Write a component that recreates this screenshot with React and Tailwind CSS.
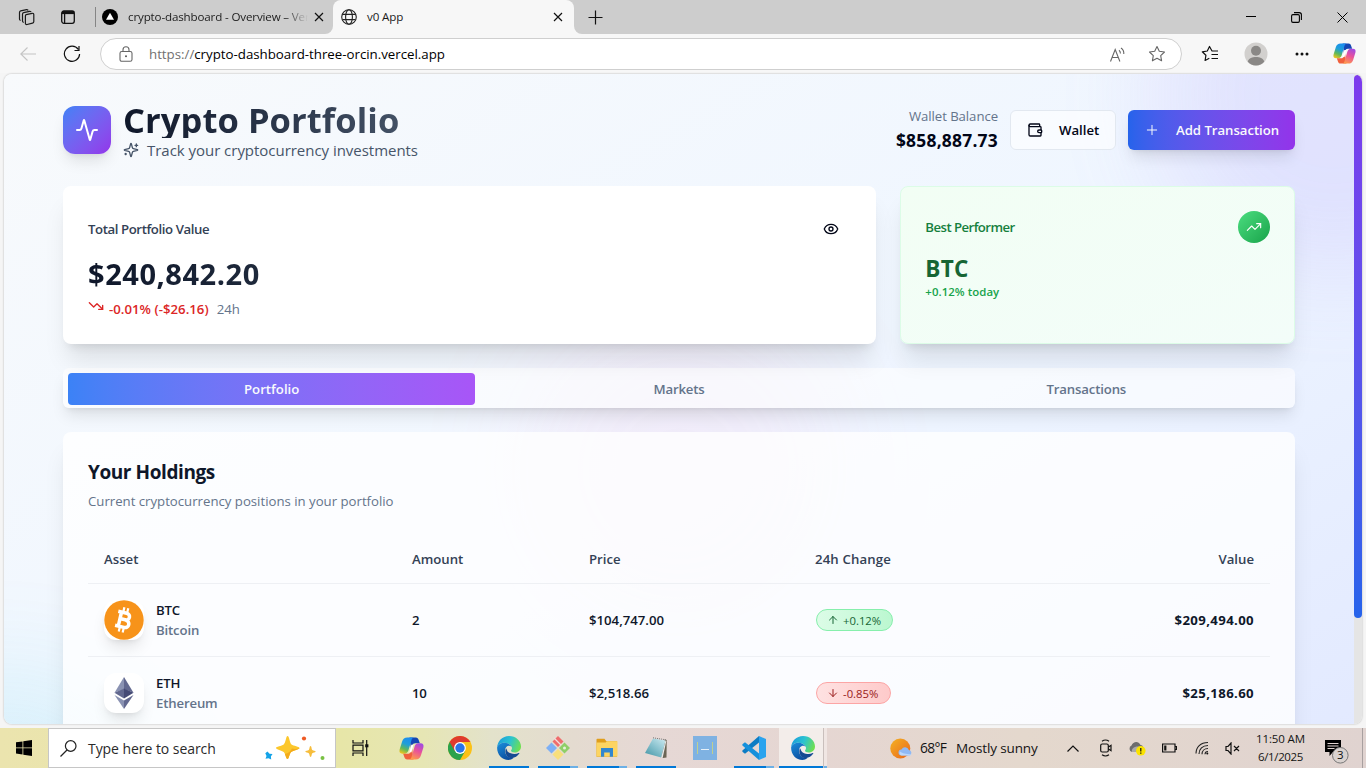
import React from "react";
import {
  Activity, Wallet, Plus, Eye, TrendingDown, TrendingUp, ArrowUp, ArrowDown,
} from "lucide-react";

/* ---------- shared marks ---------- */

function CopilotMark({ id, className }) {
  return (
    <svg viewBox="0 0 24 24" className={className}>
      <defs>
        <linearGradient id={id + "a"} x1="0.6" y1="0" x2="0.2" y2="1">
          <stop offset="0" stopColor="#1b8df0" />
          <stop offset="0.4" stopColor="#1f9fd8" />
          <stop offset="0.7" stopColor="#5fb85a" />
          <stop offset="1" stopColor="#f3c51c" />
        </linearGradient>
        <linearGradient id={id + "b"} x1="0.7" y1="0" x2="0.3" y2="1">
          <stop offset="0" stopColor="#a24be0" />
          <stop offset="0.45" stopColor="#e8519c" />
          <stop offset="1" stopColor="#ff9a4a" />
        </linearGradient>
      </defs>
      <path d="M10 1.500h6.200c1.500 0 2.200.9 2.700 2.400L20 7h-4.400c-1.600 0-2.400.7-2.900 2.200l-1.200 3z" fill="#1446b4" />
      <path d="M8 1.500h6.200c-1.300.4-1.900 1.300-2.300 2.700L9.300 13c-.7 2.600-1.700 4-4.300 4H3.300C.8 17 0 15.300.6 13L3 5.300C3.800 2.800 5.300 1.500 8 1.500z" fill={`url(#${id}a)`} />
      <path d="M14 22.500H7.800c-1.500 0-2.200-.9-2.700-2.400L4 17h4.400c1.600 0 2.400-.7 2.900-2.200l1.200-3z" fill="#f0603c" />
      <path d="M16 22.500H9.800c1.300-.4 1.900-1.300 2.300-2.700L14.700 11c.7-2.600 1.700-4 4.300-4h1.700c2.500 0 3.300 1.700 2.700 4L21 18.700c-.8 2.500-2.300 3.800-5 3.800z" fill={`url(#${id}b)`} />
      <path d="M13.800 8.300l-1.800 7.400h-2L11.800 8.300z" fill="#fff" />
    </svg>
  );
}

function EdgeMark({ id }) {
  return (
    <svg viewBox="0 0 24 24" className="h-6 w-6">
      <defs>
        <linearGradient id={id + "t"} x1="0" y1="0.3" x2="1" y2="0.6">
          <stop offset="0" stopColor="#1c9ddb" />
          <stop offset="0.5" stopColor="#2bc3d0" />
          <stop offset="1" stopColor="#6fe04d" />
        </linearGradient>
        <linearGradient id={id + "l"} x1="0" y1="0" x2="0.5" y2="1">
          <stop offset="0" stopColor="#1b8fdc" />
          <stop offset="1" stopColor="#0d4fa0" />
        </linearGradient>
      </defs>
      <path d="M.1 11.500C.5 5 5.500 0 12 0c7 0 12 5 12 10.500 0 3.500-2.700 6-6.200 6-2.500 0-3.800-.9-3.800-1.700 0-.7 1-1.100 1-2.800C15 9.500 11.500 6.700 7.500 6.700 4 6.700.8 8.700.1 11.500z" fill={`url(#${id}t)`} />
      <path d="M.1 11.500C.8 8.700 4 6.700 7.500 6.700c3.300 0 6.100 1.900 7.100 4-1-.8-2.100-1.100-3.100-.9-2.200.5-3.700 2.700-3.500 5.200.2 4.500 4 7.600 8.500 7-1.500 1.200-3.200 2-5 2C5 24 0 18.500.1 11.500z" fill={`url(#${id}l)`} />
      <path d="M9 12.200C7.200 15.800 9 22 15 22.300c2.900-.5 5.500-2.100 7.300-4.700.3-.5-.1-.9-.6-.6-4 2-10.700.6-11.700-2.800-.2-.8-.4-1.500-1-2z" fill="#154a93" />
    </svg>
  );
}

/* ---------- browser chrome ---------- */

function TabBar() {
  return (
    <div className="flex h-[34px] items-stretch bg-[#f7f7f7] text-[#1b1b1b]">
      <div className="flex w-[333px] items-center rounded-br-lg bg-[#cdcdcd]">
        <svg viewBox="0 0 17 17" className="ml-[18px] h-[17px] w-[17px]" fill="none" stroke="#1b1b1b" strokeWidth="1.200" strokeLinejoin="round" strokeLinecap="round">
          <path d="M8.200 5.600l5.900-1.300c1-.2 1.700.3 1.700 1.300v6.900c0 .9-.5 1.500-1.300 1.700l-5.400 1.300c-1 .2-1.700-.3-1.700-1.300V7.100c0-.8.300-1.300.8-1.500z" />
          <path d="M5.300 13.200c-.5-.2-.8-.7-.8-1.400V5.200c0-.8.400-1.300 1.200-1.500l5.800-1.300c.6-.1 1 0 1.300.3M2.200 11.200c-.4-.2-.7-.7-.7-1.300V3.400c0-.8.4-1.300 1.200-1.500L8.500.7c.6-.1 1 0 1.300.3" />
        </svg>
        <svg viewBox="0 0 16 16" className="ml-[25px] h-4 w-4" fill="none" stroke="#111" strokeWidth="1.300">
          <rect x="1.700" y="2" width="12.600" height="12.300" rx="2.200" />
          <path d="M2 3.600h12" strokeWidth="3" /><path d="M4.600 5v9" />
        </svg>
        <div className="ml-[19px] h-5 w-px bg-[#858585]" />
        <svg viewBox="0 0 16 16" className="ml-[6px] h-4 w-4">
          <circle cx="8" cy="8" r="8" fill="#000" />
          <path d="M8 3.800l4 7H4z" fill="#fff" />
        </svg>
        <div className="ml-[10px] w-[180px] overflow-hidden whitespace-nowrap bg-[linear-gradient(90deg,#1b1b1b_87%,transparent_100%)] bg-clip-text text-[11.600px] leading-[18px] tracking-[-0.013em] text-transparent">
          crypto-dashboard - Overview – Vercel
        </div>
        <svg viewBox="0 0 10 10" className="ml-[6px] h-[10px] w-[10px]" stroke="#111" strokeWidth="1.200"><path d="M1 1l8 8M9 1l-8 8" /></svg>
      </div>
      <div className="w-[241px] bg-[#cdcdcd]">
        <div className="flex h-full items-center rounded-t-lg bg-[#f7f7f7]">
          <svg viewBox="0 0 16 16" className="ml-2 h-4 w-4" fill="none" stroke="#222" strokeWidth="1.100"><circle cx="8" cy="8" r="7.300" /><ellipse cx="8" cy="8" rx="3.400" ry="7.300" /><path d="M1.500 5.400h13M1.500 10.600h13" /></svg>
          <div className="ml-[10px] flex-1 text-[11.600px] leading-[18px] tracking-[-0.010em]">v0 App</div>
          <svg viewBox="0 0 10 10" className="mr-[11px] h-[10px] w-[10px]" stroke="#111" strokeWidth="1.200"><path d="M1 1l8 8M9 1l-8 8" /></svg>
        </div>
      </div>
      <div className="flex flex-1 items-center rounded-bl-lg bg-[#cdcdcd]">
        <svg viewBox="0 0 15 15" className="ml-[14px] h-[15px] w-[15px]" stroke="#111" strokeWidth="1.200"><path d="M7.500 .5v14M.5 7.500h14" /></svg>
        <div className="flex-1" />
        <svg viewBox="0 0 10 10" className="h-[10px] w-[10px]" stroke="#000" strokeWidth="1"><path d="M0 4.500h10" /></svg>
        <svg viewBox="0 0 11 11" className="ml-[35px] h-[11px] w-[11px]" fill="none" stroke="#000" strokeWidth="1.100"><rect x=".6" y="2.600" width="7.800" height="7.800" rx="1.300" /><path d="M3 .6h5.200c1.400 0 2.200.8 2.200 2.200V8" /></svg>
        <svg viewBox="0 0 11 11" className="ml-[35px] mr-[18px] h-[11px] w-[11px]" stroke="#000" strokeWidth="1"><path d="M.5 .5l10 10M10.500 .5l-10 10" /></svg>
      </div>
    </div>
  );
}

function AddressBar() {
  return (
    <div className="flex h-[39px] items-center bg-[#f7f7f7]">
      <svg viewBox="0 0 16 14" className="ml-5 h-[14px] w-4" fill="none" stroke="#c4c4c4" strokeWidth="1.100"><path d="M16 7H.8M7.500 .5L.8 7l6.700 6.500" /></svg>
      <svg viewBox="0 0 18 18" className="ml-[27px] h-[18px] w-[18px]" fill="none" stroke="#111" strokeWidth="1.200"><path d="M15.300 4.500A7.600 7.600 0 1 0 16.600 9M16 1v4.500h-4.500" /></svg>
      <div className="ml-[19px] mt-px flex h-8 w-[1082px] items-center rounded-full border border-[#cfcfcf] bg-white">
        <svg viewBox="0 0 14 16" className="ml-[18px] h-4 w-[14px]" fill="none" stroke="#666" strokeWidth="1.100">
          <rect x="1" y="5.500" width="12" height="9.800" rx="1.800" />
          <path d="M4 5.500V3.800a3 3 0 0 1 6 0v1.700" />
          <circle cx="7" cy="10.300" r="1" fill="#555" stroke="none" />
        </svg>
        <div className="ml-4 flex-1 text-[13.300px] leading-5 tracking-[-0.001em] text-black"><span className="text-[#717171]">https://</span>crypto-dashboard-three-orcin.vercel.app</div>
        <svg viewBox="0 0 17 15" className="mr-[-2px] h-[15px] w-[17px]" fill="none" stroke="#666" strokeWidth="1.100">
          <path d="M1.500 14.500L6.200 2.500l4.700 12M3.100 10.500h6.200M10 3.300c1 .8 1.500 1.900 1.400 3.200M12 1c2 1.400 3 3.400 2.800 6" />
        </svg>
        <svg viewBox="0 0 18 18" className="ml-6 mr-[15px] h-[18px] w-[18px]" fill="none" stroke="#666" strokeWidth="1.100" strokeLinejoin="round">
          <path d="M9 1.500l2.300 4.800 5.200.7-3.800 3.600.9 5.200L9 13.300l-4.600 2.500.9-5.200L1.500 7l5.200-.7z" />
        </svg>
      </div>
      <svg viewBox="0 0 18 18" className="ml-[19px] h-[18px] w-[18px]" fill="none" stroke="#111" strokeWidth="1.200" strokeLinejoin="round">
        <path d="M11 6L8.500 1.500 6.300 6l-5 .8 3.600 3.500-.8 5.200 4.200-2.200M10.700 6h6.300M10.500 9.500h6.500M10.500 13.500h6.500" />
      </svg>
      <svg viewBox="0 0 24 24" className="ml-[25px] h-6 w-6">
        <circle cx="12" cy="12" r="11.500" fill="#d2d0ce" />
        <circle cx="12" cy="8.800" r="5" fill="#8a8886" />
        <path d="M3.700 19.500c1.500-3.500 4.500-4.500 8.300-4.500s6.800 1 8.300 4.500c-2 2.500-5 4-8.300 4s-6.300-1.500-8.300-4z" fill="#8a8886" />
      </svg>
      <svg viewBox="0 0 14 4" className="ml-[27px] h-1 w-[14px]" fill="#111"><circle cx="2" cy="2" r="1.500" /><circle cx="7" cy="2" r="1.500" /><circle cx="12" cy="2" r="1.500" /></svg>
      <CopilotMark id="cpA" className="ml-6 h-[23px] w-[23px]" />
    </div>
  );
}

/* ---------- dashboard ---------- */

function Sparkle() {
  return (
    <svg viewBox="0 0 24 24" className="h-4 w-4" fill="none" stroke="currentColor" strokeWidth="2" strokeLinecap="round" strokeLinejoin="round">
      <path d="M9.937 15.500A2 2 0 0 0 8.500 14.063l-6.135-1.582a.5.5 0 0 1 0-.962L8.500 9.936A2 2 0 0 0 9.937 8.500l1.582-6.135a.5.5 0 0 1 .963 0L14.063 8.500A2 2 0 0 0 15.500 9.937l6.135 1.581a.5.5 0 0 1 0 .964L15.500 14.063a2 2 0 0 0-1.437 1.437l-1.582 6.135a.5.5 0 0 1-.963 0z" />
      <path d="M20 3v4M22 5h-4M4 17v2M5 18H3" />
    </svg>
  );
}

function Header() {
  return (
    <div className="flex h-16 items-center justify-between">
      <div className="flex items-center gap-3">
        <div className="flex h-12 w-12 items-center justify-center rounded-xl bg-gradient-to-br from-[#3b82f6] to-[#9333ea] shadow-lg">
          <Activity className="h-6 w-6 text-white" />
        </div>
        <div>
          <h1 className="h-10 whitespace-nowrap bg-gradient-to-r from-[#0f172a] to-[#475569] bg-clip-text pt-px text-[34.500px] font-bold leading-[41px] tracking-[0.002em] text-transparent">Crypto Portfolio</h1>
          <p className="flex h-6 items-center gap-2 whitespace-nowrap text-[15px] leading-6 tracking-[-0.002em] text-[#475569]"><Sparkle /><span>Track your cryptocurrency investments</span></p>
        </div>
      </div>
      <div className="flex items-center gap-3">
        <div className="text-right">
          <p className="text-[13.200px] leading-5 tracking-[-0.005em] text-[#64748b]">Wallet Balance</p>
          <p className="pt-px text-[17.400px] font-bold leading-[27px] tracking-[0.014em] text-[#020617]">$858,887.73</p>
        </div>
        <div className="flex h-10 w-[106px] items-center rounded-md border border-[#e2e8f0] bg-white/60 pl-4 text-[13.200px] font-semibold text-[#020617]">
          <Wallet className="h-4 w-4" /><span className="ml-4 pt-0.5">Wallet</span>
        </div>
        <div className="flex h-10 w-[167px] items-center rounded-md bg-gradient-to-r from-[#2563eb] to-[#9333ea] pl-4 text-[13.200px] font-semibold text-[#f8fafc] shadow-lg">
          <Plus className="h-4 w-4" strokeWidth={1.500} /><span className="ml-4 whitespace-nowrap pt-0.5 tracking-[-0.003em]">Add Transaction</span>
        </div>
      </div>
    </div>
  );
}

function SummaryCards() {
  return (
    <div className="mt-6 grid h-[158px] grid-cols-3 gap-6">
      <div className="col-span-2 rounded-lg bg-white p-[25px] shadow-xl">
        <div className="flex h-9 items-center justify-between text-[13.200px] font-semibold text-[#334155]">
          <span className="pt-0.5 tracking-[-0.031em]">Total Portfolio Value</span>
          <Eye className="mr-3 h-4 w-4 text-[#020617]" />
        </div>
        <div className="mt-[9px] text-[29px] font-bold leading-9 tracking-[0.019em] text-[#0f172a]"><span className="bg-gradient-to-r from-[#0f172a] to-[#1e293b] bg-clip-text text-transparent">$240,842.20</span></div>
        <div className="mt-[7px] flex h-5 items-center text-[13.200px]">
          <TrendingDown className="mb-[6px] h-4 w-4 text-[#dc2626]" />
          <span className="ml-[5px] pt-0.5 font-semibold tracking-[0.002em] text-[#dc2626]">-0.01% (-$26.16)</span>
          <span className="ml-2 pt-0.5 text-[#64748b]">24h</span>
        </div>
      </div>
      <div className="rounded-lg border border-[#dcfce7] bg-gradient-to-br from-[#f2fef4] to-[#f3fdf9] p-6 shadow-xl">
        <div className="flex h-8 items-center justify-between text-[13.200px] font-semibold text-[#15803d]">
          <span className="pt-0.5 tracking-[-0.042em]">Best Performer</span>
          <div className="flex h-8 w-8 items-center justify-center rounded-full bg-gradient-to-br from-[#4ade80] to-[#16a34a] text-white"><TrendingUp className="h-4 w-4" strokeWidth={1.700} /></div>
        </div>
        <div className="mt-[10px] text-[22.500px] font-bold leading-8 tracking-[0.010em] text-[#166534]">BTC</div>
        <div className="mt-[-1px] text-[11.400px] font-semibold leading-4 tracking-[0.005em] text-[#16a34a]">+0.12% today</div>
      </div>
    </div>
  );
}

function Tabs() {
  return (
    <div className="mt-6 grid h-10 grid-cols-3 rounded-md bg-white/60 p-[5px] text-center text-[13.200px] font-semibold leading-8 tracking-[-0.012em] text-[#64748b] shadow-lg">
      <div className="rounded bg-gradient-to-r from-[#3b82f6] to-[#a855f7] tracking-normal text-[#f8fafc]">Portfolio</div>
      <div>Markets</div>
      <div>Transactions</div>
    </div>
  );
}

function BtcCoin() {
  return (
    <svg viewBox="0 0 40 40" className="h-10 w-10">
      <circle cx="20" cy="20" r="19.700" fill="#f7931a" />
      <g transform="rotate(13 20 20)" fill="none" stroke="#fff">
        <path d="M15.800 12v16M12.500 12.800h8.600c4.800 0 4.800 6.700 0 6.700h-5.500M21.500 19.700c5.600 0 5.600 7.500 0 7.500h-9" strokeWidth="3.500" />
        <path d="M17.500 7.500v4.500M21.500 7.500v4.500M17.500 28v4.500M21.500 28v4.500" strokeWidth="2.200" />
      </g>
    </svg>
  );
}

function EthCoin() {
  return (
    <svg viewBox="0 0 40 40" className="h-10 w-10">
      <path d="M20 4l-9.500 15.700L20 16z" fill="#8a92b2" />
      <path d="M20 4l9.500 15.700L20 16z" fill="#62688f" />
      <path d="M10.500 19.700L20 15.400v10z" fill="#62688f" />
      <path d="M29.500 19.700L20 15.400v10z" fill="#454a75" />
      <path d="M10.500 22L20 27.500V36z" fill="#8a92b2" />
      <path d="M29.500 22L20 27.500V36z" fill="#62688f" />
    </svg>
  );
}

const cols = "grid grid-cols-[308px_177px_226px_170px_269px] items-center px-4";

function Row({ coin, sym, name, amount, price, change, value }) {
  return (
    <div className={cols + " h-[73px] border-b border-[#eef0f4] text-[13.200px] font-semibold text-[#0f172a]"}>
      <div className="flex items-center gap-3">
        <div className="h-10 w-10 rounded-xl bg-white shadow-lg">{coin}</div>
        <div className="leading-5 tracking-[-0.012em]"><div>{sym}</div><div className="text-[#64748b]">{name}</div></div>
      </div>
      <div className="pt-0.5 tracking-[-0.020em]">{amount}</div>
      <div className="pt-0.5">{price}</div>
      <div className="flex">{change}</div>
      <div className="pt-0.5 text-right font-bold tracking-[0.028em]">{value}</div>
    </div>
  );
}

function Holdings() {
  return (
    <div className="mt-6 h-[400px] rounded-lg bg-white/80 px-[25px] pt-[25px] shadow-xl">
      <h2 className="h-[30px] text-[19px] font-bold leading-[30px] tracking-[-0.022em] text-[#0f172a]">Your Holdings</h2>
      <p className="mt-1 text-[13.200px] leading-5 text-[#64748b]">Current cryptocurrency positions in your portfolio</p>
      <div className="mt-6">
        <div className={cols + " h-[49px] border-b border-[#eef0f4] pt-0.5 text-[13.200px] font-semibold text-[#334155]"}>
          <div>Asset</div><div>Amount</div><div>Price</div><div className="tracking-[0.010em]">24h Change</div><div className="text-right">Value</div>
        </div>
        <Row coin={<BtcCoin />} sym="BTC" name="Bitcoin" amount="2" price="$104,747.00" value="$209,494.00"
          change={<div className="ml-px flex h-[22px] w-[77px] items-center rounded-full border border-[#86efac] bg-gradient-to-r from-[#dcfce7] to-[#bbf7d0] pl-[10px] text-[11.300px] font-medium text-[#166534]"><ArrowUp className="mr-1 h-3 w-3" /><span className="pt-0.5">+0.12%</span></div>} />
        <Row coin={<EthCoin />} sym="ETH" name="Ethereum" amount="10" price="$2,518.66" value="$25,186.60"
          change={<div className="ml-px flex h-[22px] w-[75px] items-center rounded-full border border-[#fca5a5] bg-gradient-to-r from-[#fee2e2] to-[#fecaca] pl-[10px] text-[11.300px] font-medium text-[#991b1b]"><ArrowDown className="mr-1 h-3 w-3" /><span className="pt-0.5">-0.85%</span></div>} />
      </div>
    </div>
  );
}

function Page() {
  return (
    <div className="flex h-[655px] bg-[#f5f5f5] px-1 pb-[4px] pt-px">
      <div className="flex h-[650px] w-[1358px] overflow-hidden rounded-lg bg-white shadow-[0_0_2px_#aaa]">
        <div className="relative w-[1350px] overflow-hidden">
          <div className="absolute inset-x-0 top-0 h-[790px] bg-gradient-to-br from-[#f8fafc] via-[#eff6ff] to-[#e0e7ff]">
            <div className="absolute -right-40 -top-40 h-[360px] w-[360px] rounded-full bg-[#a08bfa] opacity-[0.17] blur-[50px]" />
            <div className="absolute -bottom-36 -left-40 h-80 w-80 rounded-full bg-gradient-to-tr from-[#22d3ee] to-[#22c3dd] opacity-[0.15] blur-3xl" />
            <div className="absolute left-1/2 top-1/2 h-80 w-80 -translate-x-1/2 -translate-y-1/2 rounded-full bg-[#f472b6] opacity-[0.08] blur-3xl" />
          </div>
          <div className="relative ml-[59px] w-[1232px] pt-6">
            <Header />
            <SummaryCards />
            <Tabs />
            <Holdings />
          </div>
        </div>
        <div className="w-2 bg-[#e5e5e5] pt-px">
          <div className="h-[543px] rounded-full bg-gradient-to-b from-[#7c3aed] to-[#2563eb]" />
        </div>
      </div>
    </div>
  );
}

/* ---------- taskbar ---------- */

function Slot({ children, line }) {
  return (
    <div className="flex h-10 w-[49px] flex-col items-center pr-px">
      <div className="flex h-[38px] items-center pt-[2px]">{children}</div>
      {line === 1 && <div className="h-0.5 w-10 bg-[#0078d7]" />}
      {line === 2 && <div className="flex h-0.5 w-10"><div className="w-8 bg-[#0078d7]" /><div className="w-2 bg-[#6cb0e6]" /></div>}
    </div>
  );
}

function Taskbar() {
  return (
    <div className="flex h-10 items-center bg-[linear-gradient(90deg,#ebe4ae_0%,#e7e6a8_25%,#e6e6b4_31%,#e3e2cb_36%,#e4dbd0_42%,#e6d8d5_48%,#e5d6d2_60%,#e4d8cd_75%,#e0d3d0_100%)] text-[#141414]">
      <div className="flex h-10 w-12 items-center justify-center">
        <svg viewBox="0 0 16 16" className="h-4 w-4"><path d="M0 2.300L6.500 1.400v6.100H0zM7.300 1.300L16 0v7.500H7.300zM0 8.300h6.500v6.200L0 13.600zM7.300 8.300H16V16l-8.700-1.300z" fill="#000" /></svg>
      </div>
      <div className="flex h-10 w-72 items-center border border-[#c6c6c6] bg-white">
        <svg viewBox="0 0 17 17" className="ml-[11px] h-[17px] w-[17px]" fill="none" stroke="#222" strokeWidth="1.200"><circle cx="10.700" cy="6" r="5.300" /><path d="M7 10L.5 16.500" /></svg>
        <span className="ml-[11px] w-[160px] whitespace-nowrap pt-px text-[14px] tracking-[-0.004em] text-[#2a2a2a]">Type here to search</span>
        <svg viewBox="0 0 62 26" className="ml-[16px] h-[26px] w-[62px]">
          <path d="M23.500 1c1.800 0 2.200 7 4 8.400s8 2.100 8 3.600-6.500 2.400-8.300 4-2.200 7-3.700 7-2-5.400-3.800-7-7.700-2.500-7.700-4 5.700-2.100 7.700-3.600S22 1 23.500 1z" fill="#fcc72c" />
          <path d="M35.500 13c0 1.500-6.500 2.400-8.300 4s-2.200 7-3.700 7c-1.200 0-1.700-2.800-2.600-5 3.500-.5 6-3 7-5.500 2.500.8 5 .5 7.600-.5z" fill="#f3ab1c" />
          <path d="M46.500 11c1.200 0 .9 3 1.800 3.900s3.500.7 3.500 1.700-2.700.8-3.500 1.700-.6 3.700-1.700 3.700-.9-2.800-1.800-3.700-3.500-.7-3.500-1.700 2.600-.9 3.500-1.700.6-3.900 1.700-3.900z" fill="#f6bd3c" />
          <path d="M3.500 16.500l2 2.300 3 .2-1.600 2.500.3 3-2.700-1.300-3 .5 1-2.800-1.200-2.600z" fill="#14a3e8" />
          <circle cx="40" cy="3.500" r="2.100" fill="#ee5a24" /><circle cx="58.500" cy="23" r="2" fill="#79c143" />
        </svg>
      </div>
      <div className="flex w-[51px] justify-center pr-[3px]">
        <svg viewBox="0 0 17 16" className="h-4 w-[17px]" fill="none" stroke="#111" strokeWidth="1.200"><path d="M1 0v3h10V0M1 16v-3h10v3M1 5.200h10v5.600H1zM14.700 0v16" /><path d="M13.200 5.800h3.200" strokeWidth="3" /></svg>
      </div>
      <Slot><CopilotMark id="cpB" className="h-[25px] w-[25px]" /></Slot>
      <Slot>
        <svg viewBox="0 0 24 24" className="h-6 w-6">
          <circle cx="12" cy="12" r="12" fill="#fbc116" />
          <path d="M1.600 6A12 12 0 0 0 12 24l5.200-9L12 12z" fill="#2ba24c" />
          <path d="M1.600 6A12 12 0 0 1 22.400 6H12l-5.200 9z" fill="#df3b2e" />
          <circle cx="12" cy="12" r="5.900" fill="#fff" /><circle cx="12" cy="12" r="4.700" fill="#2b74e8" />
        </svg>
      </Slot>
      <Slot line={1}><EdgeMark id="e1" /></Slot>
      <Slot line={2}>
        <svg viewBox="0 0 24 24" className="h-6 w-6">
          <path d="M12 0l5.500 5.500L12 11 6.500 5.500z" fill="#ef6d6d" /><path d="M18.500 6.500L24 12l-5.500 5.500L13 12z" fill="#8fcf68" />
          <path d="M5.500 6.500L11 12l-5.500 5.500L0 12z" fill="#7db0f5" /><path d="M12 13l5.500 5.500L12 24l-5.500-5.500z" fill="#f8df7c" />
          <path d="M8 2l7 7" stroke="#f3dede" strokeWidth="1.200" /><circle cx="18.500" cy="12" r="1.500" fill="#e8f2d8" />
        </svg>
      </Slot>
      <Slot line={2}>
        <svg viewBox="0 0 22 20" className="h-5 w-[22px]">
          <path d="M.5 1.500C.5 1 1 .7 1.500.7h7l1.800 2.600H21v15.500H.5z" fill="#e09e1c" /><path d="M.5 4.500h9L11 3.300h10.500V18.500H.5z" fill="#fcd462" />
          <path d="M5 10h12v8.700h-3.200v-4.200H8.200v4.200H5z" fill="#3287cf" />
        </svg>
      </Slot>
      <Slot line={1}>
        <svg viewBox="0 0 24 24" className="h-6 w-6">
          <defs><linearGradient id="note" x1="1" y1="0" x2="0.2" y2="1"><stop offset="0" stopColor="#cdeaf0" /><stop offset="0.5" stopColor="#8cc4d0" /><stop offset="1" stopColor="#4c9bab" /></linearGradient></defs>
          <path d="M20.500 3.500l2.200.5-.2 17.500-3.500.5-2-1.500z" fill="#6b6555" />
          <path d="M9 2.500L21.500 4.500l-4.300 17L1 17z" fill="url(#note)" />
          <path d="M21.500 4.500l-4.300 17 1.500.2L22.300 5z" fill="#e9ecec" /><path d="M9 1.800l13 2" stroke="#777" strokeDasharray="1 1" />
        </svg>
      </Slot>
      <Slot>
        <svg viewBox="0 0 24 24" className="h-6 w-6"><path d="M0 0h24v24H0z" fill="#7fb2e2" /><path d="M4.500 6v12M19.500 6v12" stroke="#c0cf8e" /><path d="M8 13.500h8" stroke="#e5f0f8" /></svg>
      </Slot>
      <Slot line={2}>
        <svg viewBox="0 0 24 24" className="h-6 w-6">
          <path d="M17 0l7 3v18l-7 3z" fill="#2aa3ee" />
          <path d="M17 6.500L3 17.800.4 15.800v-1.400L17 0z" fill="#0d7cc4" /><path d="M17 17.500L3 6.200.4 8.200v1.400L17 24z" fill="#1590dc" />
        </svg>
      </Slot>
      <div className="flex h-10 w-[45px] flex-col border-r border-[#c9bfbc] bg-[#f3edea]">
        <div className="flex h-[38px] items-center justify-center pl-[3px] pt-[2px]"><EdgeMark id="e2" /></div>
        <div className="h-0.5 w-full bg-[#0078d7]" />
      </div>
      <div className="flex h-10 w-[3px] flex-col justify-end bg-[#f0e6e3]"><div className="h-0.5 bg-[#6cb0e6]" /></div>
      <svg viewBox="0 0 23 21" className="ml-[63px] h-[21px] w-[23px]">
        <defs><linearGradient id="sun" x1="0" y1="0" x2="1" y2="1"><stop offset="0" stopColor="#f4b223" /><stop offset="1" stopColor="#e9661c" /></linearGradient></defs>
        <circle cx="10.300" cy="10.500" r="10" fill="url(#sun)" />
        <path d="M11.500 17.500a3 3 0 0 1 0-6 4 4 0 0 1 7.300.5 2.800 2.800 0 0 1 .5 5.500z" fill="#8fb9f5" /><path d="M11.500 17.500a2.500 2.500 0 0 1-1.500-4c3 2 5 2.500 11.500 3-.6.700-1.200 1-2.200 1z" fill="#bcd8fb" />
      </svg>
      <span className="ml-[7px] w-[36px] whitespace-nowrap pt-px text-[13.800px] tracking-[-0.045em]">68°F</span>
      <span className="w-[83px] whitespace-nowrap pt-px text-[13.500px] tracking-[-0.010em]">Mostly sunny</span>
      <svg viewBox="0 0 12 7" className="ml-[28px] h-[7px] w-3" fill="none" stroke="#111" strokeWidth="1.200"><path d="M.5 6.500L6 1l5.500 5.500" /></svg>
      <svg viewBox="0 0 12 18" className="ml-[21px] h-[18px] w-3" fill="none" stroke="#111" strokeWidth="1.200"><rect x=".7" y="5" width="7.600" height="8" rx="1.500" /><path d="M8.500 8l2.500-1.700v5.400L8.500 10M2 2.200Q5.500-.2 9 2.200M2 15.800q3.500 2.400 7 0" /></svg>
      <svg viewBox="0 0 18 16" className="ml-4 h-4 w-[18px]"><path d="M4 12a3.500 3.500 0 0 1-.5-6.500C5 1.500 10.500.5 12.500 5c1.500 0 2.500 1 3 3L7 12z" fill="#6d6d6d" /><path d="M4 12c-1-3 2-6 7-5.500L8 12z" fill="#aaa" /><circle cx="12.800" cy="10.800" r="4.800" fill="#fbe300" /><path d="M12.800 8v3.500M12.800 12.500v1.200" stroke="#111" strokeWidth="1.200" /></svg>
      <svg viewBox="0 0 15 10" className="ml-[16px] h-[10px] w-[15px]" fill="none" stroke="#111" strokeWidth="1.200"><path d="M.6 1h12.400v8H.6zM13.500 3.500h1v3h-1" /><path d="M3.300 2.500v5" strokeWidth="2.200" /></svg>
      <svg viewBox="0 0 14 14" className="ml-[18px] h-[14px] w-[14px]" fill="none" stroke="#222" strokeWidth="1.100"><path d="M1 12.500C1 6 5.500 1.500 13 1.500M4 13C4 8 7.500 4.500 13 4.500M7 13.200c0-3.400 2.500-5.700 6-5.700M10 13.300c0-1.800 1.200-2.800 3-2.800" /><circle cx="12.300" cy="12.500" r="1" fill="#111" stroke="none" /></svg>
      <svg viewBox="0 0 15 13" className="ml-4 h-[13px] w-[15px]" fill="none" stroke="#111" strokeWidth="1.200"><path d="M1 4.500h2L6 1v11L3 8.500H1zM9 4l5 5M14 4L9 9" /></svg>
      <div className="ml-[12px] w-[57px] whitespace-nowrap text-center text-[11.500px] leading-[18px]"><div className="tracking-[-0.012em]">11:50 AM</div><div className="tracking-[-0.030em]">6/1/2025</div></div>
      <svg viewBox="0 0 25 26" className="ml-[15px] mt-[7px] h-[26px] w-[25px]">
        <path d="M1 1h16v12H9l-3.500 4v-4H1z" fill="#000" /><path d="M3.500 4.500h11M3.500 7h11M3.500 9.500h7" stroke="#e0d3d0" />
        <circle cx="16.300" cy="16.300" r="7.800" fill="#d9d2cf" stroke="#777" />
        <text x="16.300" y="20.300" textAnchor="middle" fontSize="11.500" fill="#111">3</text>
      </svg>
      <div className="ml-auto mr-[3px] h-10 w-px bg-[#a8a0a0]" />
    </div>
  );
}

export default function App() {
  return (
    <div className="h-[768px] w-[1366px] overflow-hidden bg-[#f7f7f7] font-['Open_Sans','Noto_Sans',sans-serif]">
      <TabBar />
      <AddressBar />
      <Page />
      <Taskbar />
    </div>
  );
}
